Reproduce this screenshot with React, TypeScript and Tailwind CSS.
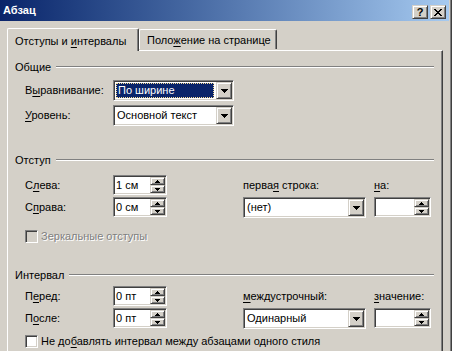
import React from "react";

const sunken =
  "border border-t-[#808080] border-l-[#808080] border-r-white border-b-white shadow-[inset_1px_1px_0_#404040,inset_-1px_-1px_0_#d4d0c8]";
const raised =
  "border border-t-[#d4d0c8] border-l-[#d4d0c8] border-r-[#404040] border-b-[#404040] shadow-[inset_1px_1px_0_#fff,inset_-1px_-1px_0_#808080] bg-[#d4d0c8]";

function U({ children }: { children: React.ReactNode }) {
  return <span className="underline decoration-1 underline-offset-[2px]">{children}</span>;
}

function DownArrow() {
  return (
    <svg width="7" height="4" viewBox="0 0 7 4" shapeRendering="crispEdges">
      <path d="M0 0h7v1H0z M1 1h5v1H1z M2 2h3v1H2z M3 3h1v1H3z" fill="#000" />
    </svg>
  );
}

function SmallUp() {
  return (
    <svg width="5" height="3" viewBox="0 0 5 3" shapeRendering="crispEdges">
      <path d="M2 0h1v1H2z M1 1h3v1H1z M0 2h5v1H0z" fill="#000" />
    </svg>
  );
}

function SmallDown() {
  return (
    <svg width="5" height="3" viewBox="0 0 5 3" shapeRendering="crispEdges">
      <path d="M0 0h5v1H0z M1 1h3v1H1z M2 2h1v1H2z" fill="#000" />
    </svg>
  );
}

function Combo({ w, text, selected }: { w: string; text: string; selected?: boolean }) {
  return (
    <div className={`${sunken} ${w} h-[21px] bg-white flex p-px shrink-0`}>
      <div className="flex-1 flex items-stretch min-w-0">
        {selected ? (
          <div className="flex-1 m-px mr-[2px] bg-[#0a246a] text-white border border-dotted border-[#f5db95] flex items-center pl-px">
            {text}
          </div>
        ) : (
          <div className="flex-1 flex items-center pl-[2px]">{text}</div>
        )}
      </div>
      <div className={`${raised} w-[16px] flex items-center justify-center`}>
        <DownArrow />
      </div>
    </div>
  );
}

function Spin({ w, text }: { w: string; text: string }) {
  return (
    <div className={`${sunken} ${w} h-[20px] bg-white flex p-px shrink-0`}>
      <div className="flex-1 flex items-center pl-px">{text}</div>
      <div className="w-[15px] flex flex-col">
        <div className={`${raised} h-[8px] flex items-center justify-center`}>
          <SmallUp />
        </div>
        <div className={`${raised} h-[8px] flex items-center justify-center`}>
          <SmallDown />
        </div>
      </div>
    </div>
  );
}

function GroupHeader({ title, mt }: { title: string; mt: string }) {
  return (
    <div className={`flex items-center h-[14px] pl-[7px] pr-[8px] ${mt}`}>
      <span>{title}</span>
      <div className="flex-1 ml-[5px] h-[2px] border-t border-t-[#808080] border-b border-b-white" />
    </div>
  );
}

function Check({ label, disabled, mt }: { label: React.ReactNode; disabled?: boolean; mt: string }) {
  return (
    <div className={`flex items-center h-[13px] pl-[17px] ${mt}`}>
      <div className={`${sunken} w-[13px] h-[13px] shrink-0 ${disabled ? "bg-[#d4d0c8]" : "bg-white"}`} />
      <span
        className={`ml-[3px] ${disabled ? "text-[#808080] [text-shadow:1px_1px_0_#fff]" : "text-black"}`}
      >
        {label}
      </span>
    </div>
  );
}

export default function App() {
  return (
    <div className="w-[452px] h-[351px] overflow-hidden bg-[#d4d0c8] flex font-['Tahoma','Liberation_Sans',Arial,sans-serif] text-[11px] leading-[13px] text-black">
      <div className="w-[449px] flex flex-col">
        {/* Title bar */}
        <div className="h-[21px] shrink-0 bg-linear-to-r from-[#0a246a] to-[#a6caf0] flex items-center justify-between pl-[3px] pr-[3px]">
          <span className="text-white font-bold">Абзац</span>
          <div className="flex gap-[2px] self-end mb-[2px]">
            <div className={`${raised} w-[16px] h-[14px] flex items-center justify-center font-bold text-[11px] leading-none pt-px`}>
              ?
            </div>
            <div className={`${raised} w-[16px] h-[14px] flex items-center justify-center`}>
              <svg width="8" height="7" viewBox="0 0 8 7" shapeRendering="crispEdges">
                <path
                  d="M0 0h2v1H0z M6 0h2v1H6z M1 1h2v1H1z M5 1h2v1H5z M2 2h4v1H2z M3 3h2v1H3z M2 4h4v1H2z M1 5h2v1H1z M5 5h2v1H5z M0 6h2v1H0z M6 6h2v1H6z"
                  fill="#000"
                />
              </svg>
            </div>
          </div>
        </div>

        {/* Tabs */}
        <div className="flex items-end h-[22px] mt-[7px] pl-[7px] relative z-10 shrink-0">
          <div className="w-[132px] h-[23px] -mb-px bg-[#d4d0c8] border-l border-t border-white border-r border-r-[#404040] shadow-[inset_-1px_0_0_#808080] rounded-tl-[2px] rounded-tr-[2px] pl-[7px] pt-[6px] whitespace-nowrap">
            Отступы и <U>и</U>нтервалы
          </div>
          <div className="w-[138px] h-[20px] mb-px bg-[#d4d0c8] border-l border-t border-white border-r border-r-[#404040] shadow-[inset_-1px_0_0_#808080] rounded-tl-[2px] rounded-tr-[2px] pl-[7px] pt-[4px] whitespace-nowrap">
            Поло<U>ж</U>ение на странице
          </div>
        </div>

        {/* Panel */}
        <div className="ml-[7px] w-[436px] flex-1 border-t border-l border-white border-r border-r-[#404040] shadow-[inset_-1px_0_0_#808080] flex flex-col">
          <GroupHeader title="Общие" mt="mt-[9px]" />
          <div className="flex items-center pl-[17px] mt-[6px]">
            <span className="w-[88px] shrink-0">
              В<U>ы</U>равнивание:
            </span>
            <Combo w="w-[121px]" text="По ширине" selected />
          </div>
          <div className="flex items-center pl-[17px] mt-[4px]">
            <span className="w-[88px] shrink-0">
              <U>У</U>ровень:
            </span>
            <Combo w="w-[121px]" text="Основной текст" />
          </div>

          <GroupHeader title="Отступ" mt="mt-[27px]" />
          <div className="flex items-center pl-[17px] mt-[8px] h-[20px]">
            <span className="w-[88px] shrink-0">
              С<U>л</U>ева:
            </span>
            <Spin w="w-[54px]" text="1 см" />
            <span className="ml-[76px] w-[131px] shrink-0">
              перва<U>я</U> строка:
            </span>
            <span>
              <U>н</U>а:
            </span>
          </div>
          <div className="flex items-start pl-[17px] mt-[2px] h-[21px]">
            <span className="w-[88px] shrink-0 h-[20px] flex items-center">
              <span>
                С<U>п</U>рава:
              </span>
            </span>
            <Spin w="w-[54px]" text="0 см" />
            <div className="ml-[76px]">
              <Combo w="w-[123px]" text="(нет)" />
            </div>
            <div className="ml-[8px]">
              <Spin w="w-[57px]" text="" />
            </div>
          </div>
          <Check label="Зеркальные отступы" disabled mt="mt-[12px]" />

          <GroupHeader title="Интервал" mt="mt-[25px]" />
          <div className="flex items-center pl-[17px] mt-[4px] h-[20px]">
            <span className="w-[88px] shrink-0">
              П<U>е</U>ред:
            </span>
            <Spin w="w-[54px]" text="0 пт" />
            <span className="ml-[76px] w-[131px] shrink-0">
              <U>м</U>еждустрочный:
            </span>
            <span>
              <U>з</U>начение:
            </span>
          </div>
          <div className="flex items-start pl-[17px] mt-[2px] h-[21px]">
            <span className="w-[88px] shrink-0 h-[20px] flex items-center">
              <span>
                П<U>о</U>сле:
              </span>
            </span>
            <Spin w="w-[54px]" text="0 пт" />
            <div className="ml-[76px]">
              <Combo w="w-[123px]" text="Одинарный" />
            </div>
            <div className="ml-[8px]">
              <Spin w="w-[57px]" text="" />
            </div>
          </div>
          <Check
            label={
              <>
                Не до<U>б</U>авлять интервал между абзацами одного стиля
              </>
            }
            mt="mt-[6px]"
          />
        </div>
      </div>
      <div className="w-[3px] flex shrink-0">
        <div className="w-px bg-[#d4d0c8]" />
        <div className="w-px bg-[#808080]" />
        <div className="w-px bg-[#404040]" />
      </div>
    </div>
  );
}
